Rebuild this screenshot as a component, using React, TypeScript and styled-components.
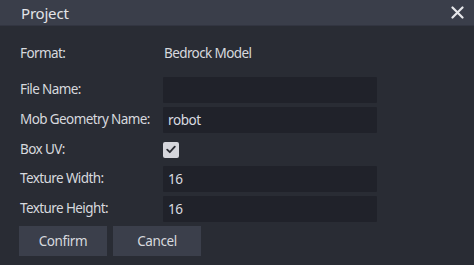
import React, { useState } from 'react';
import styled, { createGlobalStyle } from 'styled-components';

const GlobalStyle = createGlobalStyle`
  html, body {
    margin: 0;
    padding: 0;
    background: #292c34;
  }
  body {
    font-family: "Noto Sans", "DejaVu Sans", sans-serif;
    color: #d4d6dc;
  }
`;

const Dialog = styled.div`
  width: 474px;
  height: 265px;
  background: #292c34;
  display: flex;
  flex-direction: column;
  overflow: hidden;
`;

const TitleBar = styled.div`
  height: 25px;
  flex: none;
  display: flex;
  align-items: center;
  justify-content: space-between;
  background: #3a3e4a;
  border-bottom: 1px solid #323541;
  padding: 0 7px 0 21px;
`;

const Title = styled.span`
  font-size: 15px;
  letter-spacing: -0.2px;
  color: #e3e4e8;
`;

const CloseButton = styled.button`
  width: 20px;
  height: 20px;
  padding: 0;
  border: none;
  background: none;
  color: #e6e7ea;
  display: flex;
  align-items: center;
  justify-content: center;
  cursor: pointer;
`;

const Body = styled.div`
  padding: 17px 20px 0 19px;
  display: flex;
  flex-direction: column;
  gap: 4px;
`;

const Row = styled.div<{ $h: number; $after?: number }>`
  display: grid;
  grid-template-columns: 144px 214px;
  align-items: center;
  height: ${p => p.$h}px;
  margin-bottom: ${p => p.$after ?? 0}px;
  font-size: 13.5px;
  letter-spacing: -0.6px;
`;

const Label = styled.span<{ $lift?: number }>`
  color: #d7d9de;
  padding-left: 1px;
  margin-top: ${p => -(p.$lift ?? 0)}px;
`;

const Value = styled.span`
  color: #d7d9de;
  padding-left: 1px;
`;

const Input = styled.input`
  box-sizing: border-box;
  width: 214px;
  height: 26px;
  border: none;
  outline: none;
  background: #20222a;
  color: #d9dbe0;
  font-family: inherit;
  font-size: 13.5px;
  letter-spacing: -0.4px;
  padding: 0 5px;
  border-radius: 1px;
`;

const Check = styled.button`
  width: 16px;
  height: 16px;
  padding: 0;
  border: none;
  border-radius: 2px;
  background: #d5d6dc;
  display: flex;
  align-items: center;
  justify-content: center;
`;

const Buttons = styled.div`
  display: flex;
  gap: 6px;
`;

const Button = styled.button`
  width: 88px;
  height: 30px;
  border: none;
  background: #3b3f4b;
  color: #d7d9de;
  font-family: inherit;
  font-size: 13.5px;
  letter-spacing: -0.4px;
  cursor: pointer;
`;

function App() {
  const [boxUv, setBoxUv] = useState(true);

  return (
    <Dialog>
      <GlobalStyle />
      <TitleBar>
        <Title>Project</Title>
        <CloseButton>
          <svg width="13" height="13" viewBox="0 0 13 13">
            <path d="M1.5 1.5 L11.5 11.5 M11.5 1.5 L1.5 11.5" stroke="currentColor" strokeWidth="2.2" strokeLinecap="round" />
          </svg>
        </CloseButton>
      </TitleBar>
      <Body>
        <Row $h={20} $after={10}>
          <Label>Format:</Label>
          <Value>Bedrock Model</Value>
        </Row>
        <Row $h={26}>
          <Label $lift={3}>File Name:</Label>
          <Input defaultValue="" />
        </Row>
        <Row $h={26}>
          <Label $lift={3}>Mob Geometry Name:</Label>
          <Input defaultValue="robot" />
        </Row>
        <Row $h={25}>
          <Label $lift={1}>Box UV:</Label>
          <Check onClick={() => setBoxUv(!boxUv)}>
            {boxUv && (
              <svg width="10" height="9" viewBox="0 0 10 9">
                <path d="M1.2 4.6 L3.8 7.2 L8.8 1.6" fill="none" stroke="#2a2c33" strokeWidth="1.8" strokeLinecap="round" strokeLinejoin="round" />
              </svg>
            )}
          </Check>
        </Row>
        <Row $h={26}>
          <Label $lift={3}>Texture Width:</Label>
          <Input defaultValue="16" />
        </Row>
        <Row $h={26}>
          <Label $lift={3}>Texture Height:</Label>
          <Input defaultValue="16" />
        </Row>
        <Buttons>
          <Button>Confirm</Button>
          <Button>Cancel</Button>
        </Buttons>
      </Body>
    </Dialog>
  );
}

export default App;
